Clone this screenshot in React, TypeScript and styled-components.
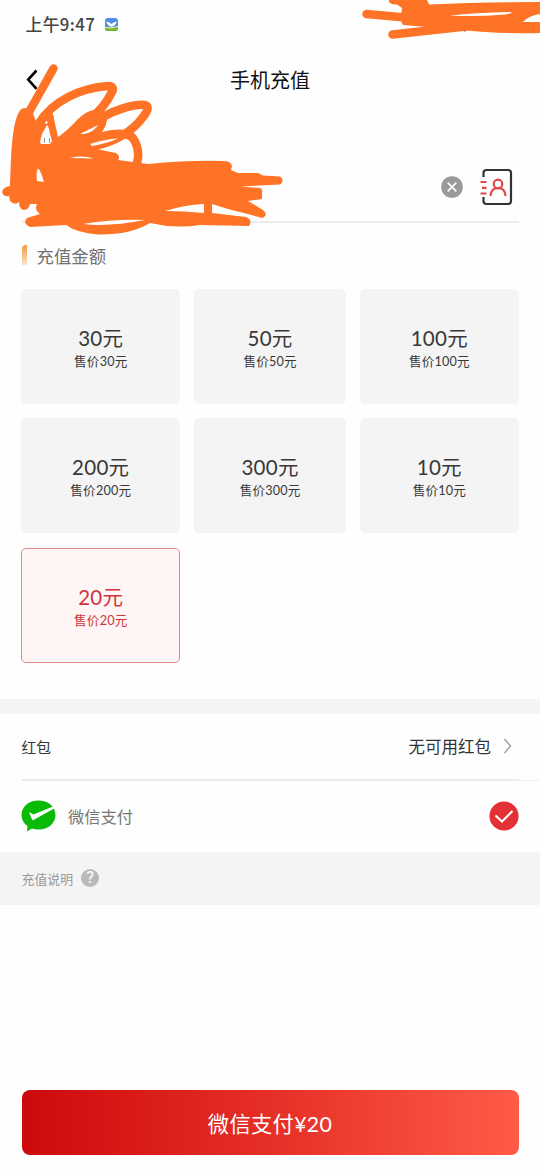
import React from "react";
import styled, { createGlobalStyle } from "styled-components";

const Global = createGlobalStyle`
  * { box-sizing: border-box; }
  body { margin: 0; background: #fefefe; font-family: Lato, "Noto Sans CJK SC", sans-serif; color: #333; }
  button { font: inherit; color: inherit; border: 0; background: none; padding: 0; }
`;

const Page = styled.div`
  position: relative;
  width: 540px;
  height: 1170px;
  display: flex;
  flex-direction: column;
  overflow: hidden;
`;
const StatusBar = styled.div`
  height: 48px;
  padding-left: 25.5px;
  display: flex;
  align-items: center;
  gap: 10px;
  font-size: 16.8px;
  font-weight: 500;
  color: #444;
  letter-spacing: 0.4px;
`;
const Clock = styled.span`
  font-family: "Noto Sans CJK SC", sans-serif;
  white-space: nowrap;
`;
const Header = styled.header`
  height: 64px;
  padding: 0 26px;
  display: grid;
  grid-template-columns: 40px 1fr 40px;
  align-items: center;
`;
const Back = styled.button`
  display: flex;
`;
const Title = styled.h1`
  margin: 0;
  text-align: center;
  font-size: 20px;
  line-height: 28px;
  font-weight: 400;
  color: #111;
`;
const PhoneField = styled.div`
  height: 111px;
  margin: 0 21.5px;
  padding: 41px 4.5px 0 0;
  border-bottom: 2px solid #ededed;
  display: flex;
  justify-content: flex-end;
  align-items: center;
  gap: 17px;
`;
const SectionTitle = styled.h2`
  margin: 0;
  height: 66px;
  padding: 0 0 2px 21.5px;
  display: flex;
  align-items: center;
  gap: 10px;
  font-size: 17.4px;
  font-weight: 400;
  color: #707070;
`;
const Marker = styled.i`
  width: 5px;
  height: 20px;
  border-radius: 4px 0 2px 0;
  background: linear-gradient(#f39a3f, #fde3c8);
`;
const Amounts = styled.div`
  display: grid;
  grid-template-columns: 158.7px 152px 158.5px;
  grid-auto-rows: 114.8px;
  gap: 14.6px 14px;
  padding: 0 21.4px;
  height: 410px;
  align-content: start;
`;
const Amount = styled.button<{ $on?: boolean }>`
  border-radius: 5px;
  border: 1px solid ${(p) => (p.$on ? "#dd8b8f" : "#f4f4f4")};
  background: ${(p) => (p.$on ? "#fef5f4" : "#f4f4f4")};
  color: ${(p) => (p.$on ? "#cf3440" : "#383838")};
  display: flex;
  flex-direction: column;
  align-items: center;
  padding-top: 35px;
`;
const Value = styled.span`
  font-size: 20.5px;
  line-height: 26px;
  letter-spacing: 0.3px;
`;
const Price = styled.span`
  margin-top: 2px;
  font-size: 12.6px;
  line-height: 18px;
  letter-spacing: 0.2px;
`;
const Band = styled.div`
  height: 15px;
  background: #f4f4f4;
`;
const CouponRow = styled.div`
  height: 67px;
  margin-left: 21.5px;
  padding: 0 28px 2px 0;
  display: flex;
  align-items: center;
  border-bottom: 1px solid #efefef;
  font-size: 14.7px;
`;
const CouponState = styled.span`
  margin-left: auto;
  margin-right: 12px;
  font-size: 16.5px;
`;
const Rule = styled.div`
  height: 2px;
  margin: -2px 21.5px 0;
  background: #ebebeb;
`;
const PayRow = styled.div`
  height: 71px;
  padding: 0 21.5px 1px 21px;
  display: flex;
  align-items: center;
  gap: 12px;
  font-size: 16.3px;
  color: #777;
`;
const Selected = styled.svg`
  margin-left: auto;
`;
const Notes = styled.div`
  height: 52.5px;
  padding-left: 21.5px;
  background: #f4f4f4;
  display: flex;
  align-items: center;
  gap: 8px;
  font-size: 12.9px;
  color: #989898;
`;
const Help = styled.i`
  width: 18px;
  height: 18px;
  border-radius: 50%;
  background: #b9b9b9;
  color: #f7f7f7;
  text-align: center;
  font: 500 16px/18px Roboto, sans-serif;
`;
const PayButton = styled.button`
  margin: auto 21.5px 15px;
  padding-bottom: 1px;
  height: 65px;
  flex: none;
  border-radius: 8px;
  background: linear-gradient(90deg, #cc0a0d, #e62f27 50%, #ff5b47);
  color: #fff;
  font-size: 21.3px;
  letter-spacing: 0.3px;
`;
const Scribble = styled.svg`
  position: absolute;
  inset: 0;
  pointer-events: none;
`;

const amounts = [30, 50, 100, 200, 300, 10, 20];

const Doodles = () => (
  <Scribble width="540" height="250" viewBox="0 0 540 250" fill="none" stroke="#ff7326" strokeLinecap="round" strokeLinejoin="round" strokeWidth="8.5">
    <path d="M53.500 68.500L29 112M39 123C53 101 80 88 108 86Q115 86 112 92Q104 108 91 118M103 117C117 109 134 104 145 105Q151 107 143 117C130 135 110 143 91 147M84 144C105 133 123 131 132 137C137 143 140 153 137 163" />
    <path stroke="none" fill="#ff7326" d="M25 108Q31 108 33 113L36 122L46 111Q54 111 54 119L58 137Q67 131 78 119Q88 109 98 110Q107 112 107 120Q106 132 91 141L86 147L116 153Q121 156 118 160L148 164Q190 160 223 161Q231 161 232 166L231 170L238 173L258 173L263 175.500L280 176.500Q285 180.500 280 184.500L241 186.500L260 188Q263 189 262 193L262 199L248 201L263 210Q269 215 262 218L244 213Q230 210 212 204L212 213L246 217Q253 220 249 226L200 225Q175 229 150 223Q130 235 98 234.500Q77 233 66 225L30 227Q22 223 27 218L40 214Q34 210 37 204H30Q29 210 23 210Q19 208 19 202Q15 206 10 201L9 196Q3 197 2 192Q3 187 10 186C11 163 11 126 19 112Q21 108 25 108Z" />
    <path stroke="none" fill="#fefefe" d="M40 142L42 134L47 125Q49 127 50 134L52 141L50 144H41ZM45 123L46.500 121L48 122.500L46 124ZM37 181C36 172 37 158 44 182ZM80 134L98 125Q94 132 84 134ZM90 144Q105 139 118 138.500Q108 143 92 146ZM70 158Q82 155 94 158.500ZM83 224Q114 219 145 220Q109 227 83 224ZM165 211Q184 205 204 204L204 213Q185 211 165 211Z" />
    <path stroke="#999" strokeWidth="1" strokeLinecap="butt" d="M44.500 138V143M49.500 138V143" />
    <path d="M366.500 14L405 17.500M393 0L423 2M392.500 34.500L470 26" />
    <path stroke="none" fill="#ff7326" d="M391 0H427L429 4.500Q480 2 540 2V15Q533 17 526 22L540 21.500V33Q495 34 464 30L403 25L400.500 20L402 8Z" />
    <path stroke="none" fill="#fefefe" d="M450 15.500Q475 12.500 510 12Q515 13 505 14.500Q475 17 450 15.500ZM523 22Q528 16 540 14V22Z" />
    <circle cx="465" cy="31" r=".7" fill="#a33b10" stroke="none" />
  </Scribble>
);

export default function App() {
  return (
    <Page>
      <Global />
      <StatusBar>
        <Clock>上午9:47</Clock>
        <svg width="13" height="13" viewBox="0 0 13 13">
          <rect width="13" height="13" rx="3" fill="#508ee5" />
          <path d="M0 9H13V10Q13 13 10 13H3Q0 13 0 10Z" fill="#78b52b" />
          <path d="M1 3.500Q5 4 6.500 6Q8 4 12 3.500Q10 8 6.500 9Q3 8 1 3.500" fill="#fff" />
          <path d="M0 9.500Q6.500 11 13 8.500" fill="none" stroke="#e6f4db" />
        </svg>
      </StatusBar>
      <Header>
        <Back aria-label="返回">
          <svg width="12" height="22" viewBox="0 0 12 22" fill="none" stroke="#000" strokeWidth="2.600">
            <path d="M10.500 1.500L2.200 10.500L10.500 19.800" />
          </svg>
        </Back>
        <Title>手机充值</Title>
      </Header>
      <PhoneField>
        <svg width="22" height="22" viewBox="0 0 22 22">
          <circle cx="11" cy="11" r="10.800" fill="#999" />
          <path d="M6.700 6.700L15.300 15.300M15.300 6.700L6.700 15.300" stroke="#fff" strokeWidth="1.700" />
        </svg>
        <svg width="34" height="38" viewBox="0 0 34 38" fill="none" strokeWidth="2.200">
          <path d="M3.500 9V5Q3.500 2 6.500 2H28Q31 2 31 5V33Q31 36 28 36H6.500Q3.500 36 3.500 33V29" stroke="#333" />
          <g stroke="#e34548">
            <path d="M.5 14H6.500M2 19.800H6.500M.5 25.500H6.500M10.500 28Q11 20 18 20Q25 20 25.500 28" />
            <circle cx="18" cy="16" r="4.300" />
          </g>
        </svg>
      </PhoneField>
      <SectionTitle><Marker />充值金额</SectionTitle>
      <Amounts>
        {amounts.map((n) => (
          <Amount key={n} $on={n === 20}>
            <Value>{n}元</Value>
            <Price>售价{n}元</Price>
          </Amount>
        ))}
      </Amounts>
      <Band />
      <CouponRow>
        红包
        <CouponState>无可用红包</CouponState>
        <svg width="9" height="16" viewBox="0 0 9 16" fill="none" stroke="#999" strokeWidth="1.300">
          <path d="M1.500 1L7.500 8L1.500 15" />
        </svg>
      </CouponRow>
      <Rule />
      <PayRow>
        <svg width="35" height="32" viewBox="0 0 35 32">
          <path d="M17.500 .5C27 .5 34.500 6.500 34.500 15S27 29.500 17.500 29.500Q14 29.500 11 28.500L6 31.500L6.500 26Q.5 22 .5 15C.5 6.500 8 .5 17.500 .5Z" fill="#09bb07" />
          <path d="M8 12L12.500 14.500L32 6.500L34 8L12.500 20Q11.500 20.500 11 19.500Z" fill="#fff" />
        </svg>
        微信支付
        <Selected width="30" height="30" viewBox="0 0 30 30">
          <circle cx="15" cy="15" r="14.600" fill="#e43136" />
          <path d="M6.500 14.500L13 20.500L23.500 10" fill="none" stroke="#fff" strokeWidth="2" />
        </Selected>
      </PayRow>
      <Notes>充值说明<Help>?</Help></Notes>
      <PayButton>微信支付¥20</PayButton>
      <Doodles />
    </Page>
  );
}
